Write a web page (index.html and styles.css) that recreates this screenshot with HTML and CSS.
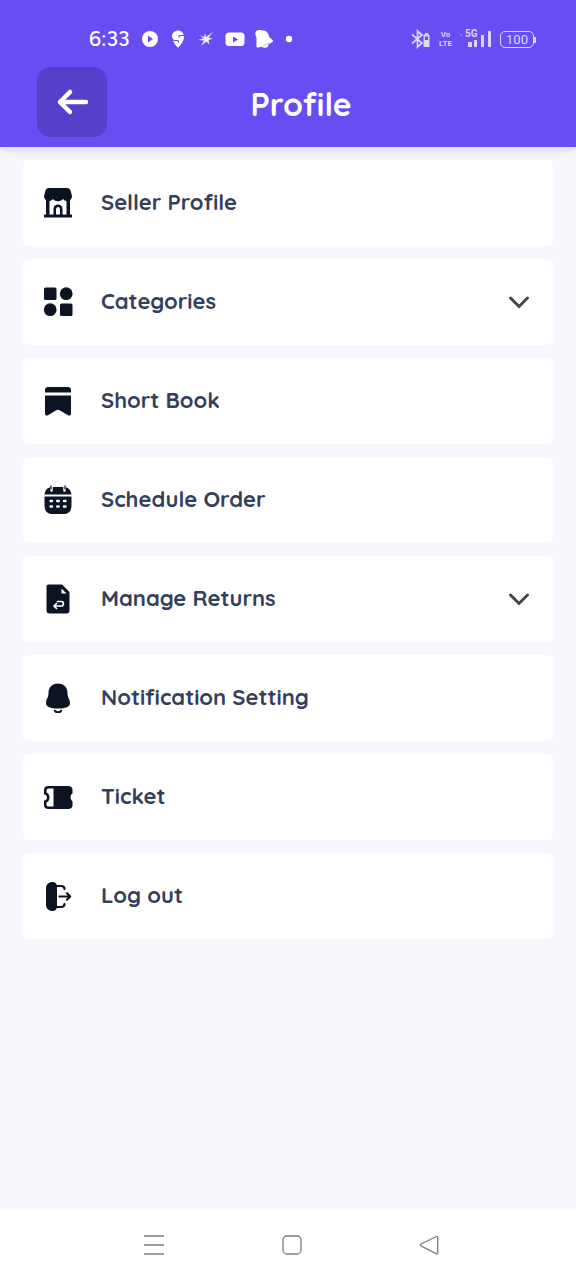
FILE: index.html
```html
<!DOCTYPE html>
<html lang="en">
<head>
<meta charset="utf-8">
<meta name="viewport" content="width=device-width, initial-scale=1">
<title>Profile</title>
<link rel="stylesheet" href="styles.css">
</head>
<body>
<div class="screen">
  <header class="header">
    <div class="status">
      <span class="clock">6:33</span>
      <div class="notices">
        <svg width="18" height="18" viewBox="0 0 18 18"><circle cx="9" cy="9" r="8" fill="#fff"/><path d="M7 5.500v7l5-3.500z" fill="#674df2"/></svg>
        <svg width="18" height="18" viewBox="0 0 18 18"><path d="M9.500.5C5.500.5 3 3 3 6c0 1.800.8 2.800 2 3.500-.8.500-.8 1.500-.4 2.500.8 2 2.400 3.800 4.400 5.800 3-3.300 6-6.800 6-10.300 0-4-2.200-7-5.500-7z" fill="#fff"/><path d="M15 5.500H10v2.500M4.500 10.500h4.800v2.500" fill="none" stroke="#674df2" stroke-width="1"/></svg>
        <svg width="18" height="18" viewBox="0 0 18 18"><path d="M8 3l1 4L16 2l-4.500 5.800 4.500.7-4.500 1.500 1 4.500-3-3L4 16l3-5.500-6-.5 5.200-1.500L3 5l4 2.300z" fill="#fff" opacity=".9"/></svg>
        <svg width="20" height="18" viewBox="0 0 20 18"><rect x=".5" y="2.500" width="19" height="13.500" rx="3.500" fill="#fff"/><path d="M8 6.500v6l5-3z" fill="#674df2"/></svg>
        <svg width="18" height="18" viewBox="0 0 18 18"><path d="M1.500 7.500C-.5 4 0 1 2.500.5 4-.5 6-.3 7 .5c4-.5 6.500 2 7.200 6.500l3.600 3.200c.5.800.2 1.500-.5 1.800l-4 2.400c.3 1.900-.6 3.300-3.200 3.300-1.500 0-2.500-.3-3-1L3 17.500c-1 .2-1.800-.5-1.500-1.500z" fill="#fff"/><path d="M8 16l6-3" stroke="#674df2" stroke-width=".4"/></svg>
        <svg class="dot" width="8" height="8" viewBox="0 0 8 8"><circle cx="4" cy="4" r="3.200" fill="#fff"/></svg>
      </div>
      <div class="radios">
        <svg width="20" height="20" viewBox="0 0 20 20"><path d="M1 5.500l10 8.500-4.500 4V2L11 6 1 14.500" fill="none" stroke="#ddd6fc" stroke-width="1.700"/><path d="M14 4h3v1.500h1.500V18h-6V5.500H14z" fill="#ddd6fc"/><path d="M14 7.500h3V11h-3z" fill="#674df2"/></svg>
        <span class="volte"><span>Vo</span><span>LTE</span></span>
        <span class="signal">
          <svg width="32" height="20" viewBox="0 0 32 20"><path d="M8 13h4v5H8zM14 11h3v7h-3zM21 6h3v12h-3zM28 2h3v16h-3z" fill="#ddd6fc"/><path d="M0 5h2v2H0z" fill="#8872f5"/></svg>
          <span class="network">5G</span>
        </span>
        <span class="battery">100</span>
      </div>
    </div>
    <div class="titlebar">
      <button class="back" type="button" aria-label="Back">
        <svg width="34" height="28" viewBox="0 0 34 28"><path d="M31 14H5M15 4L5 14l10 10" fill="none" stroke="#fff" stroke-width="4.500" stroke-linecap="round" stroke-linejoin="round"/></svg>
      </button>
      <h1 class="title">Profile</h1>
    </div>
  </header>

  <main class="menu">
    <button class="item" type="button">
      <svg class="icon" viewBox="0 0 30 30"><path d="M6 0h18c2 0 3 1 3.700 3L29 8c0 2-1 3.500-2 4v14.500h2V29.500H1v-3h2V12C2 11.500 1 10 1 8l1.300-5C3 1 4 0 6 0z"/><path d="M6.500 13c1.500 0 2.500-.8 3.500-2 1.200 1.600 3 2.200 5 2.200s3.800-.6 5-2.200c1 1.200 2 2 3.500 2v13.500H19.500V21c0-2.900-1.800-4.500-4.500-4.500s-4.500 1.600-4.500 4.500v5.500h-4z" fill="#fff"/><path d="M13 26.500V21.500c0-1.500.8-2.500 2-2.500s2 1 2 2.500v5z" fill="#fff"/></svg>
      <span class="label">Seller Profile</span>
    </button>
    <button class="item" type="button" aria-expanded="false">
      <svg class="icon" viewBox="0 0 30 30"><rect x="1" y=".5" width="12.500" height="12.500" rx="1.500"/><circle cx="23.200" cy="6.700" r="6.400"/><circle cx="7.200" cy="22.700" r="6.400"/><rect x="17" y="16.500" width="12.500" height="12.500" rx="1.500"/></svg>
      <span class="label">Categories</span>
      <svg class="chevron" viewBox="0 0 22 14"><path d="M2.500 3l8.500 8.500L19.500 3"/></svg>
    </button>
    <button class="item" type="button">
      <svg class="icon" viewBox="0 0 30 30"><path d="M2 6.500V4c0-2 1.200-3 3-3h20c1.800 0 3 1 3 3v2.500zM2 9.500h26V27.500c0 2-1.500 2.500-3 1.700l-7.500-4.500c-2-1.200-3-1.200-5 0L5 29.200c-1.500.8-3 .3-3-1.700z"/></svg>
      <span class="label">Short Book</span>
    </button>
    <button class="item" type="button">
      <svg class="icon" viewBox="0 0 30 30"><path d="M1.500 9.500C2 5 4.500 2 10 2h10c5.500 0 8 3 8.500 7.500zM1.500 11.500h27V20c0 6-2.500 9-8.500 9H10c-6 0-8.500-3-8.500-9z"/><path d="M8.500 1.500v4M21.500 1.500v4" stroke="#fff" stroke-width="2.500" stroke-linecap="round"/><path d="M8 .8v3.200M22 .8v3.200" stroke="#0c1424" stroke-width="1.200" stroke-linecap="round"/><path d="M7.500 16h1.500M14.200 16h1.500M21 16h1.500M7.500 21.500h1.500M14.200 21.500h1.500M21 21.500h1.500" stroke="#fff" stroke-width="2.400" stroke-linecap="round"/></svg>
      <span class="label">Schedule Order</span>
    </button>
    <button class="item" type="button" aria-expanded="false">
      <svg class="icon" viewBox="0 0 30 30"><path d="M5.500.5H19L26.500 8v18.500c0 2-1 3-3 3h-17c-2 0-3-1-3-3v-24c0-1.300.7-2 2-2z"/><path d="M18.500 4.500L23.500 9.500h-5z" fill="#fff"/><path d="M14.500 17.500h4c2.500 0 2.500 4.500 0 4.500H11M13.500 19.500L11 22l2.500 2.500" fill="none" stroke="#fff" stroke-width="1.700" stroke-linecap="round" stroke-linejoin="round"/></svg>
      <span class="label">Manage Returns</span>
      <svg class="chevron" viewBox="0 0 22 14"><path d="M2.500 3l8.500 8.500L19.500 3"/></svg>
    </button>
    <button class="item" type="button">
      <svg class="icon" viewBox="0 0 30 30"><path d="M15 .5c6 0 9.500 4 9.500 9.500 0 5 2.500 6 2.500 10 0 4-4.500 5.500-12 5.500S3 24 3 20c0-4 2.500-5 2.500-10C5.500 4.500 9 .5 15 .5z"/><path d="M12 27.800c1.500 2 4.500 2 6 0" fill="none" stroke="#0c1424" stroke-width="2.200" stroke-linecap="round"/></svg>
      <span class="label">Notification Setting</span>
    </button>
    <button class="item" type="button">
      <svg class="icon" viewBox="0 0 30 30"><path d="M5.500 4h19.500c3 0 4.500 1.500 4.500 4v3.500c-2.500 1-2.500 6.500 0 7.500V23c0 2.800-1.500 4-4.500 4H5.500c-3 0-4.500-1.200-4.500-4v-4.500c4-.2 4-5.800 0-6V8c0-2.500 1.500-4 4.500-4z"/><path d="M10.500 6.500H6C4.200 6.500 3.500 7.300 3.500 8.500v2c4 1.800 4 8.200 0 10v2c0 1.500.7 2 2.500 2h4.500z" fill="#fff"/></svg>
      <span class="label">Ticket</span>
    </button>
    <button class="item" type="button">
      <svg class="icon" viewBox="0 0 30 30"><path d="M9.500 1c3 0 4.500 2 4.500 4v21c0 2-1.500 4-4.500 4C6 30 3 27.500 3 24V7c0-3.500 3-6 6.500-6z"/><path d="M14 5h4c2.500 0 3.500 1 3.500 3M14 26h4c2.500 0 3.500-1 3.500-3M16.500 15.500H27M24 12.300l3.200 3.200-3.200 3.200" fill="none" stroke="#0c1424" stroke-width="2.200" stroke-linecap="round" stroke-linejoin="round"/></svg>
      <span class="label">Log out</span>
    </button>
  </main>

  <nav class="system-nav" aria-label="System">
    <button class="key" type="button" aria-label="Recent apps"><svg width="22" height="22" viewBox="0 0 22 22"><path d="M1 2h20M1 11h20M1 20h20"/></svg></button>
    <button class="key" type="button" aria-label="Home"><svg width="22" height="22" viewBox="0 0 22 22"><rect x="2" y="2" width="18" height="18" rx="4"/></svg></button>
    <button class="key" type="button" aria-label="Go back"><svg width="22" height="22" viewBox="0 0 22 22"><path d="M17.500 2.500L2 10c-1 .5-1 1.300 0 1.800l15.500 8c.8.300 1.200 0 1.200-.8V3.300c0-.8-.4-1.100-1.200-.8z"/></svg></button>
  </nav>
</div>
</body>
</html>
```
FILE: styles.css
```css
* {
  box-sizing: border-box;
}

body {
  margin: 0;
  background: #f6f8fd;
  font-family: Quicksand, Lato, sans-serif;
}

button {
  border: 0;
  padding: 0;
  background: none;
  font: inherit;
  color: inherit;
  cursor: pointer;
}

svg {
  display: block;
  flex: none;
}

.screen {
  min-height: 100vh;
  display: flex;
  flex-direction: column;
}

.header {
  background: #674df2;
  color: #fff;
  padding-bottom: 10px;
  box-shadow: 0 2px 10px rgba(60, 60, 100, 0.2);
}

.status {
  display: flex;
  align-items: center;
  padding: 24px 42px 13px 89px;
  height: 67px;
}

.clock {
  width: 52px;
  font-family: Figtree, Lato, sans-serif;
  font-size: 21px;
  line-height: 30px;
  font-weight: 500;
}

.notices {
  display: flex;
  align-items: center;
  gap: 10px;
}

.dot {
  margin-left: 2px;
}

.radios {
  display: flex;
  align-items: center;
  gap: 8px;
  margin-left: auto;
  color: #ddd6fc;
}

.volte {
  display: flex;
  flex-direction: column;
  align-items: center;
  width: 13px;
  font: 700 8px/9px Roboto, sans-serif;
}

.signal {
  position: relative;
}

.network {
  position: absolute;
  top: 0;
  left: 5px;
  background: #674df2;
  font: 700 10px/10px Roboto, sans-serif;
}

.battery {
  position: relative;
  width: 34px;
  height: 17px;
  border: 1px solid #ddd6fc;
  border-radius: 5px;
  font: 13px/15px Roboto, sans-serif;
  text-align: center;
}

.battery::after {
  content: "";
  position: absolute;
  top: 5px;
  right: -3px;
  width: 2px;
  height: 6px;
  background: #ddd6fc;
}

.titlebar {
  display: flex;
  align-items: center;
  padding: 0 81px 0 37px;
}

.back {
  display: grid;
  place-items: center;
  width: 70px;
  height: 70px;
  border-radius: 14px;
  background: #573fcb;
}

.title {
  flex: 1;
  margin: 0;
  padding-top: 4px;
  font-size: 32px;
  line-height: 40px;
  font-weight: 700;
  text-align: center;
}

.menu {
  flex: 1;
  display: flex;
  flex-direction: column;
  gap: 13px;
  padding: 13px 23px;
}

.item {
  display: flex;
  align-items: center;
  gap: 28px;
  height: 86px;
  padding: 0 23px 0 20px;
  border-radius: 6px;
  background: #fff;
  text-align: left;
}

.icon {
  width: 30px;
  height: 30px;
  fill: #0c1424;
}

.label {
  flex: 1;
  padding-bottom: 2px;
  color: #33405c;
  font-size: 22px;
  line-height: 30px;
  font-weight: 700;
}

.chevron {
  width: 22px;
  height: 14px;
  fill: none;
  stroke: #444449;
  stroke-width: 3;
  stroke-linecap: round;
}

.system-nav {
  display: flex;
  justify-content: center;
  gap: 116px;
  height: 70px;
  padding-left: 7px;
  background: #fff;
}

.key svg {
  fill: none;
  stroke: #7c7c7c;
  stroke-width: 1.3;
}
```
